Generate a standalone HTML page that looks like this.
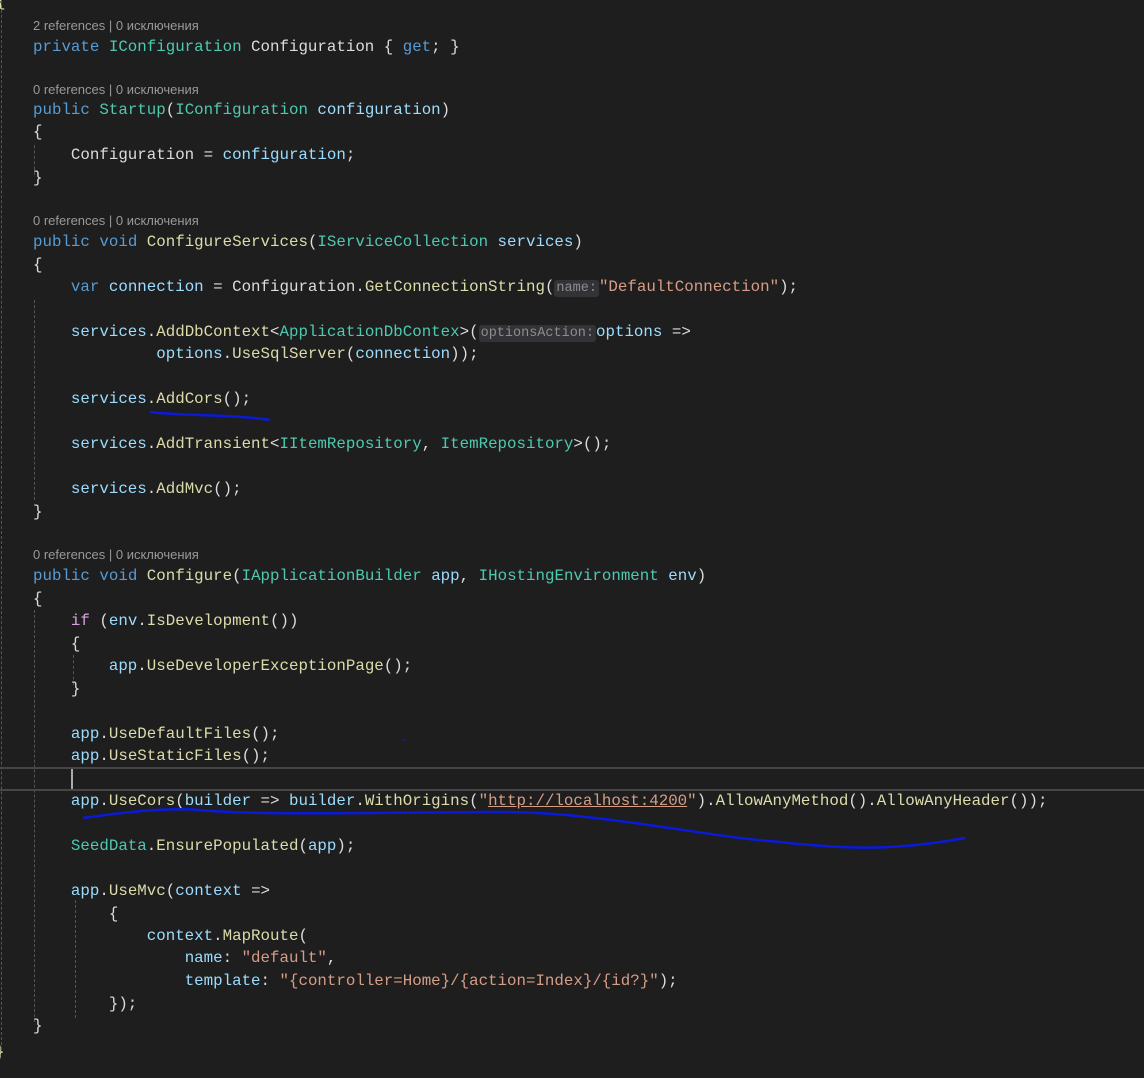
<!DOCTYPE html>
<html><head><meta charset="utf-8"><style>
body{margin:0;width:1144px;height:1078px;background:#1e1e1e;overflow:hidden;position:relative;font-family:"Liberation Mono",monospace;font-size:15.8px;color:#dcdcdc}
.l{position:absolute;height:22px;line-height:22px;white-space:pre;margin-top:1px}
.c{position:absolute;left:33px;font-family:"Liberation Sans",sans-serif;font-size:13px;color:#999;height:16px;line-height:16px;white-space:pre}
.k{color:#569cd6}.t{color:#4ec9b0}.m{color:#dcdcaa}.v{color:#9cdcfe}.s{color:#d69d85}.ct{color:#d8a0df}
.h{background:#333337;color:#8d8d8d;font-size:13.5px;padding:1px 2px;border-radius:3px}
.u{text-decoration:underline}
.g{position:absolute;width:0;border-left:1px dashed #555}
</style></head><body>
<div class="g" style="left:1px;top:0;height:1050px"></div>
<div class="g" style="left:34px;top:145px;height:30px"></div>
<div class="g" style="left:34px;top:300px;height:200px"></div>
<div class="g" style="left:34px;top:610px;height:412px"></div>
<div class="g" style="left:73px;top:655px;height:30px"></div>
<div class="g" style="left:75px;top:900px;height:118px"></div>
<div style="position:absolute;left:0;top:767px;width:1144px;height:20px;border-top:2px solid #464646;border-bottom:2px solid #464646"></div>
<div style="position:absolute;left:71px;top:769px;width:2px;height:20px;background:#aaa"></div>
<div class="l m" style="left:-4px;top:-10px">{</div>
<div class="l m" style="left:-5px;top:1040px">}</div>

<div class="c" style="top:18px">2 references | 0 исключения</div>
<div class="l" style="left:33px;top:35px"><span class="k">private</span> <span class="t">IConfiguration</span> Configuration { <span class="k">get</span>; }</div>
<div class="c" style="top:82px">0 references | 0 исключения</div>
<div class="l" style="left:33px;top:98px"><span class="k">public</span> <span class="t">Startup</span>(<span class="t">IConfiguration</span> <span class="v">configuration</span>)</div>
<div class="l" style="left:33px;top:120px">{</div>
<div class="l" style="left:33px;top:143px">    Configuration = <span class="v">configuration</span>;</div>
<div class="l" style="left:33px;top:166px">}</div>
<div class="c" style="top:213px">0 references | 0 исключения</div>
<div class="l" style="left:33px;top:230px"><span class="k">public</span> <span class="k">void</span> <span class="m">ConfigureServices</span>(<span class="t">IServiceCollection</span> <span class="v">services</span>)</div>
<div class="l" style="left:33px;top:253px">{</div>
<div class="l" style="left:33px;top:275px">    <span class="k">var</span> <span class="v">connection</span> = Configuration.<span class="m">GetConnectionString</span>(<span class="h">name:</span><span class="s">"DefaultConnection"</span>);</div>
<div class="l" style="left:33px;top:320px">    <span class="v">services</span>.<span class="m">AddDbContext</span>&lt;<span class="t">ApplicationDbContex</span>&gt;(<span class="h">optionsAction:</span><span class="v">options</span> =&gt;</div>
<div class="l" style="left:33px;top:342px">             <span class="v">options</span>.<span class="m">UseSqlServer</span>(<span class="v">connection</span>));</div>
<div class="l" style="left:33px;top:387px">    <span class="v">services</span>.<span class="m">AddCors</span>();</div>
<div class="l" style="left:33px;top:432px">    <span class="v">services</span>.<span class="m">AddTransient</span>&lt;<span class="t">IItemRepository</span>, <span class="t">ItemRepository</span>&gt;();</div>
<div class="l" style="left:33px;top:477px">    <span class="v">services</span>.<span class="m">AddMvc</span>();</div>
<div class="l" style="left:33px;top:500px">}</div>
<div class="c" style="top:547px">0 references | 0 исключения</div>
<div class="l" style="left:33px;top:564px"><span class="k">public</span> <span class="k">void</span> <span class="m">Configure</span>(<span class="t">IApplicationBuilder</span> <span class="v">app</span>, <span class="t">IHostingEnvironment</span> <span class="v">env</span>)</div>
<div class="l" style="left:33px;top:587px">{</div>
<div class="l" style="left:33px;top:609px">    <span class="ct">if</span> (<span class="v">env</span>.<span class="m">IsDevelopment</span>())</div>
<div class="l" style="left:33px;top:632px">    {</div>
<div class="l" style="left:33px;top:654px">        <span class="v">app</span>.<span class="m">UseDeveloperExceptionPage</span>();</div>
<div class="l" style="left:33px;top:677px">    }</div>
<div class="l" style="left:33px;top:722px">    <span class="v">app</span>.<span class="m">UseDefaultFiles</span>();</div>
<div class="l" style="left:33px;top:744px">    <span class="v">app</span>.<span class="m">UseStaticFiles</span>();</div>
<div class="l" style="left:33px;top:789px">    <span class="v">app</span>.<span class="m">UseCors</span>(<span class="v">builder</span> =&gt; <span class="v">builder</span>.<span class="m">WithOrigins</span>(<span class="s">"<span class="u">http://localhost:4200</span>"</span>).<span class="m">AllowAnyMethod</span>().<span class="m">AllowAnyHeader</span>());</div>
<div class="l" style="left:33px;top:834px">    <span class="t">SeedData</span>.<span class="m">EnsurePopulated</span>(<span class="v">app</span>);</div>
<div class="l" style="left:33px;top:879px">    <span class="v">app</span>.<span class="m">UseMvc</span>(<span class="v">context</span> =&gt;</div>
<div class="l" style="left:33px;top:902px">        {</div>
<div class="l" style="left:33px;top:924px">            <span class="v">context</span>.<span class="m">MapRoute</span>(</div>
<div class="l" style="left:33px;top:946px">                <span class="v">name</span>: <span class="s">"default"</span>,</div>
<div class="l" style="left:33px;top:969px">                <span class="v">template</span>: <span class="s">"{controller=Home}/{action=Index}/{id?}"</span>);</div>
<div class="l" style="left:33px;top:992px">        });</div>
<div class="l" style="left:33px;top:1014px">}</div>

<svg style="position:absolute;left:0;top:0" width="1144" height="1078">
<path d="M150 412 C180 416 230 414 270 420" stroke="#0a1ad8" stroke-width="2.5" fill="none"/>
<path d="M83 818 C140 810 170 808 200 810 C260 816 400 812 500 812 C600 812 700 836 780 842 C850 850 900 850 965 838" stroke="#0a1ad8" stroke-width="2.5" fill="none"/>
<circle cx="404" cy="740" r="1" fill="#0a1ad8"/>
</svg>
</body></html>
